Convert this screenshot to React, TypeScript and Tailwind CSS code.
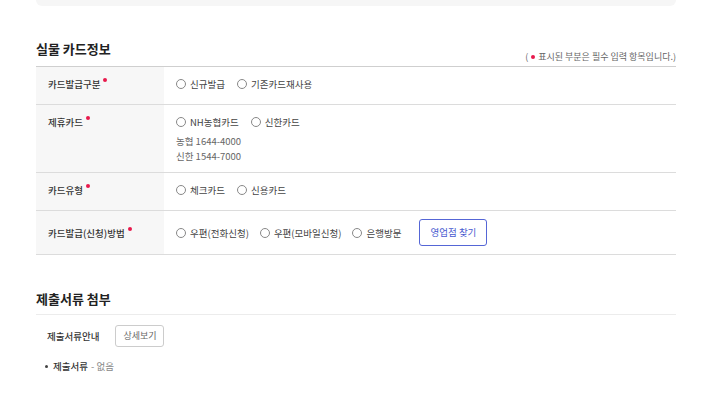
import React from "react";

const font = { fontFamily: '"Noto Sans CJK KR", "Noto Sans", sans-serif' };

function Req() {
  return <span className="ml-[3px] mt-[1px] inline-block h-[4px] w-[4px] shrink-0 rounded-full bg-[#e8194c]" />;
}

function Radio({ label }: { label: string }) {
  return (
    <label className="flex items-center gap-[4px]">
      <span className="inline-block h-[10px] w-[10px] shrink-0 rounded-full border border-[#888] bg-white" />
      <span className="text-[9.5px] leading-[14px] text-[#444]">{label}</span>
    </label>
  );
}

function Label({ text }: { text: string }) {
  return (
    <div className="flex items-start">
      <span className="text-[9.5px] font-medium leading-[14px] text-[#333]">{text}</span>
      <Req />
    </div>
  );
}

function Row({ label, children, h }: { label: string; children: React.ReactNode; h: string }) {
  return (
    <div className={`flex border-b border-[#dcdcdc] ${h}`}>
      <div className="w-[128px] shrink-0 bg-[#f7f7f7] pl-[12px] pt-[10px]">
        <Label text={label} />
      </div>
      <div className="flex-1 pl-[12px] pt-[10px]">{children}</div>
    </div>
  );
}

export default function App() {
  return (
    <div className="min-h-[406px] w-[719px] bg-white" style={font}>
      <div className="ml-[36px] w-[640px]">
        <div className="h-[6px] rounded-b-[6px] bg-[#f6f6f6]" />
        <div className="mt-[34px] flex items-end justify-between">
          <h2 className="mb-[5px] text-[13px] font-bold leading-[18px] text-[#222]">실물 카드정보</h2>
          <p className="flex items-center text-[9px] leading-[12px] text-[#666]">
            (<span className="mx-[3px] inline-block h-[4px] w-[4px] rounded-full bg-[#e8194c]" />표시된 부분은 필수 입력 항목입니다.)
          </p>
        </div>
        <div className="mt-[3px] border-t border-[#cfcfcf]">
          <Row label="카드발급구분" h="h-[38px]">
            <div className="flex gap-[12px]">
              <Radio label="신규발급" />
              <Radio label="기존카드재사용" />
            </div>
          </Row>
          <Row label="제휴카드" h="h-[68px]">
            <div className="flex gap-[12px]">
              <Radio label="NH농협카드" />
              <Radio label="신한카드" />
            </div>
            <div className="mt-[5px] text-[9.5px] leading-[15px] text-[#666]">
              <div>농협 1644-4000</div>
              <div>신한 1544-7000</div>
            </div>
          </Row>
          <Row label="카드유형" h="h-[38px]">
            <div className="flex gap-[12px]">
              <Radio label="체크카드" />
              <Radio label="신용카드" />
            </div>
          </Row>
          <div className="flex h-[44px] border-b border-[#dcdcdc]">
            <div className="flex w-[128px] shrink-0 items-center bg-[#f7f7f7] pl-[12px]">
              <Label text="카드발급(신청)방법" />
            </div>
            <div className="flex flex-1 items-center gap-[11px] pl-[12px]">
              <Radio label="우편(전화신청)" />
              <Radio label="우편(모바일신청)" />
              <Radio label="은행방문" />
              <button className="ml-[7px] h-[27px] w-[68px] rounded-[3px] border border-[#5566d6] text-[9.5px] text-[#4a5bd0]">영업점 찾기</button>
            </div>
          </div>
        </div>

        <h2 className="mt-[35px] text-[13px] font-bold leading-[18px] text-[#222]">제출서류 첨부</h2>
        <div className="mt-[6px] border-t border-[#ececec]" />
        <div className="mt-[10px] flex items-center gap-[16px] pl-[11px]">
          <span className="text-[9.5px] font-medium text-[#333]">제출서류안내</span>
          <button className="h-[22px] w-[49px] rounded-[3px] border border-[#cccccc] text-[9px] text-[#666]">상세보기</button>
        </div>
        <div className="mt-[12px] flex items-center pl-[9px] text-[9.5px]">
          <span className="mr-[5px] inline-block h-[3px] w-[3px] rounded-full bg-[#444]" />
          <span className="font-medium text-[#333]">제출서류</span>
          <span className="ml-[3px] text-[#888]">- 없음</span>
        </div>
      </div>
    </div>
  );
}
